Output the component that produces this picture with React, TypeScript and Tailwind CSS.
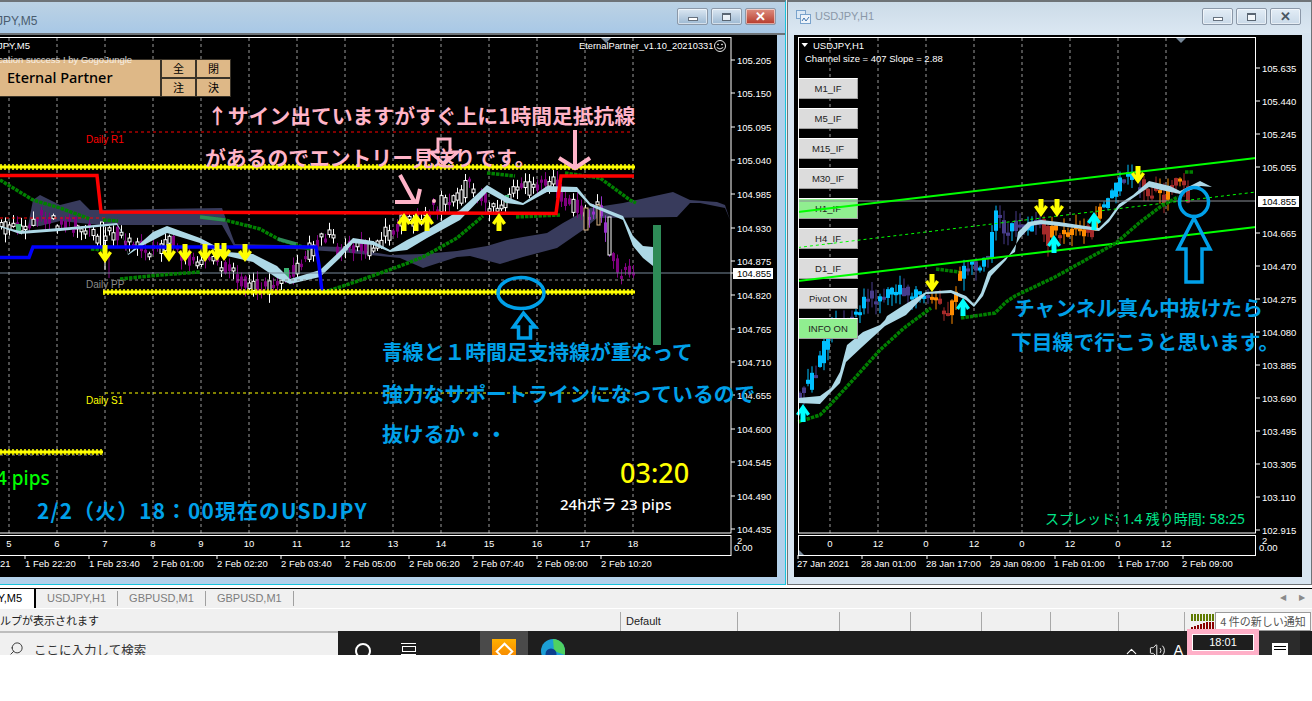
import React from 'react';
import { ChevronUp, Volume2, Search } from 'lucide-react';

type Pt = [number, number];

const at = (path: Pt[], x: number) => {
  for (let i = 1; i < path.length; i++) {
    if (x <= path[i][0]) {
      const [x0, y0] = path[i - 1];
      const [x1, y1] = path[i];
      return y0 + ((y1 - y0) * (x - x0)) / (x1 - x0);
    }
  }
  return path[path.length - 1][1];
};
const rnd = (i: number, s: number) => {
  const v = Math.sin(i * 12.9898 + s * 78.233) * 43758.5453;
  return v - Math.floor(v);
};
const pts = (p: Pt[]) => p.map((q) => q.join(',')).join(' ');

// ---- left chart data
const leftPath: Pt[] = [
  [0, 232], [16, 226], [33, 225], [37, 218], [50, 217], [60, 222], [75, 222], [100, 238], [117, 232], [130, 245],
  [160, 250], [170, 240], [190, 258], [205, 258], [232, 268], [245, 280], [265, 288], [283, 280], [300, 268], [315, 245],
  [325, 238], [333, 235], [340, 248], [360, 245], [372, 250], [400, 225], [425, 213], [440, 205], [460, 197], [470, 185],
  [490, 203], [500, 208], [520, 190], [545, 187], [557, 182], [565, 205], [575, 205], [590, 218], [600, 205], [608, 222],
  [612, 256], [620, 268], [633, 272],
];
const leftBandTop: Pt[] = [
  [0, 226], [20, 231], [60, 228], [117, 223], [122, 232], [128, 254], [153, 232], [167, 226], [200, 238], [227, 252],
  [253, 254], [277, 266], [290, 279], [320, 270], [340, 251], [353, 238], [373, 241], [390, 250], [407, 240], [427, 230],
  [460, 210], [487, 185], [507, 197], [523, 203], [547, 186], [577, 187], [590, 203], [623, 216], [633, 236], [643, 246], [653, 247],
];
const leftBandBot: Pt[] = [
  [0, 227], [20, 234], [60, 231], [117, 225], [122, 233], [128, 255], [140, 247], [167, 233], [200, 243], [227, 256],
  [253, 262], [277, 278], [290, 284], [320, 277], [340, 258], [353, 243], [373, 245], [390, 252], [407, 250], [427, 238],
  [460, 220], [487, 192], [507, 203], [523, 205], [547, 192], [577, 192], [590, 206], [623, 220], [633, 246], [643, 258], [653, 266],
];
const leftCloud: Pt[] = [
  [28, 226], [33, 200], [40, 195], [60, 205], [80, 200], [90, 210], [222, 208], [228, 225], [235, 244], [280, 245], [340, 247], [390, 255],
  [423, 254], [457, 251], [487, 246], [507, 240], [523, 237], [547, 233], [563, 223], [590, 208], [623, 203], [650, 197], [673, 192],
  [690, 200], [717, 202], [725, 205], [730, 220], [725, 208], [700, 203], [690, 203], [677, 217], [597, 218], [583, 230], [557, 248],
  [523, 257], [500, 264], [470, 256], [457, 257], [423, 268], [400, 258], [340, 252], [280, 248], [235, 248], [222, 225], [100, 225], [60, 221], [40, 226],
];
const leftGreen: Pt[][] = [
  [[0, 180], [33, 200], [60, 208], [90, 219]],
  [[103, 220], [118, 221]],
  [[91, 249], [106, 250]],
  [[200, 217], [225, 220], [260, 229], [280, 240], [310, 249]],
  [[120, 279], [160, 275], [200, 272]],
  [[325, 292], [355, 282], [400, 266], [423, 257], [457, 238], [483, 216]],
  [[487, 173], [515, 176]],
  [[516, 217], [560, 215]],
  [[565, 173], [600, 178], [630, 200], [636, 203]],
];
const leftDown = [[105, 254], [169, 253], [185, 253], [205, 253], [217, 252], [224, 252], [245, 253]];
const leftUp = [[404, 222], [416, 222], [427, 222], [499, 222]];
const leftPrices: [string, number][] = [
  ['105.205', 60], ['105.150', 93], ['105.095', 127], ['105.040', 160], ['104.985', 194], ['104.930', 228], ['104.875', 261],
  ['104.820', 295], ['104.765', 329], ['104.710', 362], ['104.655', 395], ['104.600', 429], ['104.545', 462], ['104.490', 496], ['104.435', 529],
];
const leftTimes: [string, number][] = [
  ['1 Feb 22:20', 25], ['1 Feb 23:40', 89], ['2 Feb 01:00', 153], ['2 Feb 02:20', 217], ['2 Feb 03:40', 281],
  ['2 Feb 05:00', 345], ['2 Feb 06:20', 409], ['2 Feb 07:40', 473], ['2 Feb 09:00', 537], ['2 Feb 10:20', 601],
];

// ---- right chart data
const rightPath: Pt[] = [
  [797, 402], [803, 392], [812, 385], [822, 365], [828, 340], [835, 325], [845, 320], [862, 310], [868, 297], [885, 295], [900, 290], [915, 292],
  [933, 295], [943, 307], [953, 310], [957, 300], [960, 280], [965, 270], [975, 265], [985, 263], [992, 258], [997, 205], [1003, 222], [1010, 235],
  [1015, 222], [1020, 226], [1030, 230], [1040, 222], [1045, 224], [1050, 245], [1055, 228], [1062, 232], [1075, 228], [1085, 232], [1095, 232],
  [1100, 215], [1106, 205], [1110, 195], [1118, 188], [1125, 181], [1132, 178], [1140, 182], [1148, 190], [1155, 192], [1163, 195], [1168, 197],
  [1172, 186], [1178, 180], [1185, 181], [1188, 195], [1190, 200],
];
const rightBand: Pt[] = [
  [797, 398], [819, 396], [830, 388], [839, 372], [846, 345], [862, 332], [879, 325], [884, 320], [886, 316], [903, 305], [925, 292], [950, 290], [965, 296], [973, 304],
  [980, 293], [987, 272], [1004, 258], [1014, 252], [1017, 232], [1027, 222], [1040, 220], [1058, 222], [1098, 228], [1108, 218], [1118, 204], [1132, 195],
  [1148, 181], [1169, 186], [1179, 191], [1199, 181], [1211, 187],
  [1200, 186], [1179, 194], [1160, 190], [1148, 187], [1132, 198], [1118, 208], [1108, 222], [1098, 231], [1058, 226], [1040, 224], [1030, 226], [1019, 238],
  [1005, 260], [990, 276], [982, 296], [973, 307], [965, 300], [950, 293], [925, 294], [905, 315], [884, 326], [861, 347], [845, 362], [839, 383], [830, 392], [819, 404], [797, 403],
];
const rightGreen: Pt[][] = [
  [[797, 422], [819, 415], [829, 405], [852, 380], [879, 350], [903, 328], [930, 308]],
  [[960, 318], [994, 313], [1005, 302], [1014, 296], [1054, 277], [1115, 243], [1138, 223], [1159, 207], [1177, 197]],
  [[935, 269], [958, 272]],
  [[1184, 172], [1192, 172]],
];
const rightDown = [[931, 283], [1040, 208], [1056, 208], [1137, 175]];
const rightUp = [[1093, 221], [1053, 244], [962, 307], [802, 413]];
const rightPrices: [string, number][] = [
  ['105.635', 68], ['105.440', 101], ['105.245', 134], ['105.055', 167], ['104.665', 233], ['104.470', 266], ['104.275', 299], ['104.080', 332],
  ['103.885', 365], ['103.690', 398], ['103.495', 431], ['103.305', 464], ['103.110', 497], ['102.915', 530],
];
const rightTimes: [string, number][] = [
  ['27 Jan 2021', 797], ['28 Jan 01:00', 861], ['28 Jan 17:00', 926], ['29 Jan 09:00', 990], ['1 Feb 01:00', 1054], ['1 Feb 17:00', 1118], ['2 Feb 09:00', 1182],
];
const rightBars = ['M1_IF', 'M5_IF', 'M15_IF', 'M30_IF', 'H1_IF', 'H4_IF', 'D1_IF', 'Pivot ON', 'INFO ON'];

const seq = (a: number, b: number, s: number) => {
  const r: number[] = [];
  for (let v = a; v <= b; v += s) r.push(v);
  return r;
};

const LeftCandles = () => (
  <g>
    {seq(1, 633, 4).map((x, i) => {
      const a = at(leftPath, x) + (rnd(i, 1) - 0.5) * 16;
      const b = at(leftPath, x + 4) + (rnd(i, 2) - 0.5) * 16;
      const top = Math.min(a, b);
      const h = Math.max(Math.abs(a - b), 3);
      const up = b < a;
      const wickTop = top - 1 - rnd(i, 3) * 8;
      const wickBot = top + h + 1 + rnd(i, 4) * 9;
      const c = up ? '#ffffff' : x > 585 && x < 610 ? '#9932cc' : '#800080';
      return (
        <g key={x}>
          <line x1={x + 0.5} x2={x + 0.5} y1={wickTop} y2={wickBot} stroke={c} />
          <rect x={x - 1} y={top} width={3} height={h} fill={up ? '#000' : c} stroke={up ? '#fff' : 'none'} strokeWidth={1} />
        </g>
      );
    })}
    <line x1="105" x2="105" y1="240" y2="270" stroke="#fff" />
    <rect x="100.500" y="222" width="3" height="25" fill="#000" stroke="#fff" />
    <line x1="109" x2="109" y1="255" y2="278" stroke="#800080" />
    <rect x="584" y="208" width="4" height="22" fill="#000" stroke="#deb887" />
    <rect x="597" y="205" width="3" height="20" fill="#000" stroke="#deb887" />
    <rect x="608" y="217" width="3" height="38" fill="#000" stroke="#fff" />
    <rect x="74" y="217" width="3" height="13" fill="#800080" />
    <rect x="284" y="268" width="5" height="11" fill="#3cb371" />
    <rect x="16" y="224" width="5" height="8" fill="#3cb371" />
    <rect x="505" y="195" width="4" height="8" fill="#3cb371" />
  </g>
);

const RightCandles = () => (
  <g>
    {seq(799, 1190, 4).map((x, i) => {
      const a = at(rightPath, x) + (rnd(i, 5) - 0.5) * 13;
      const b = at(rightPath, x + 4) + (rnd(i, 6) - 0.5) * 13;
      const top = Math.min(a, b);
      const h = Math.max(Math.abs(a - b), 3);
      const up = b < a;
      const warm = (x > 928 && x < 960) || (x > 1042 && x < 1100) || x > 1140;
      const c = warm ? (up ? '#ff8c00' : '#a52a2a') : up ? '#00bfff' : '#483d8b';
      return (
        <g key={x}>
          <line x1={x} x2={x} y1={top - rnd(i, 7) * 12} y2={top + h + rnd(i, 8) * 12} stroke={c} />
          <rect x={x - 2} y={top} width={4} height={h} fill={c} />
        </g>
      );
    })}
  </g>
);

const Arrow = ({ x, y, c, down }: { x: number; y: number; c: string; down?: boolean }) => (
  <path
    transform={`translate(${x} ${y})${down ? ' scale(1 -1)' : ''}`}
    d="M0 -9 L7 1 L4 3 L2.500 0 L2.500 9 L-2.500 9 L-2.500 0 L-4 3 L-7 1 Z"
    fill={c}
  />
);

const Stars = ({ x1, x2, y }: { x1: number; x2: number; y: number }) => (
  <g>
    <line x1={x1} x2={x2} y1={y} y2={y} stroke="#c8c800" strokeWidth="6" strokeDasharray="2 2" />
    <line x1={x1} x2={x2} y1={y} y2={y} stroke="#ffff00" strokeWidth="3" />
  </g>
);

const Dotted = ({ p }: { p: Pt[] }) => (
  <polyline points={pts(p)} fill="none" stroke="#008000" strokeWidth="3.500" strokeDasharray="3.500 1" />
);

const Smiley = () => (
  <g fill="none" stroke="#fff" strokeWidth="0.900">
    <circle cx="720" cy="46" r="5.500" />
    <circle cx="718" cy="44.500" r="0.500" />
    <circle cx="722" cy="44.500" r="0.500" />
    <path d="M716.800 47.500 Q720 50.500 723.200 47.500" />
  </g>
);

const LeftChart = () => (
  <svg className="block font-['Liberation_Sans']" width="777" height="542" viewBox="0 35 777 542">
    {seq(9, 633, 48).map((x) => (
      <line key={x} x1={x} x2={x} y1="38" y2="533" stroke="#9a9a9a" strokeDasharray="3 3" />
    ))}
    <polygon points={pts(leftCloud)} fill="#383b5c" />
    <LeftCandles />
    <polygon points={pts([...leftBandTop, ...[...leftBandBot].reverse()])} fill="#add8e6" />
    <line x1="105" x2="633" y1="132" y2="132" stroke="#ff0000" strokeDasharray="3 3" />
    <line x1="105" x2="633" y1="280" y2="280" stroke="#8a8a8a" strokeDasharray="3 3" />
    <line x1="105" x2="633" y1="393" y2="393" stroke="#ffff00" strokeDasharray="3 3" />
    <line x1="0" x2="103" y1="455" y2="455" stroke="#8a8a8a" strokeDasharray="3 3" />
    <line x1="0" x2="105" y1="218" y2="218" stroke="#ff0000" strokeDasharray="3 3" />
    <line x1="0" x2="731" y1="273" y2="273" stroke="#778899" />
    {leftGreen.map((p, i) => (
      <Dotted key={i} p={p} />
    ))}
    <polyline points="200,217 225,220" fill="none" stroke="#2e8b57" strokeWidth="3.500" />
    <polyline points="278,239 296,244" fill="none" stroke="#2e8b57" strokeWidth="3.500" />
    <polyline points="0,257.500 29,257.500 33,247 316,247 319,265 322,292" fill="none" stroke="#0000ff" strokeWidth="3.500" />
    <polyline points="0,175.500 97,175.500 101,212 556,213.500 561,176 634,176" fill="none" stroke="#ff0000" strokeWidth="3.500" />
    <Stars x1={0} x2={635} y={167} />
    <Stars x1={103} x2={635} y={292} />
    <Stars x1={0} x2={103} y={452} />
    {leftDown.map(([x, y]) => (
      <Arrow key={x} x={x} y={y} c="#ffff00" down />
    ))}
    {leftUp.map(([x, y]) => (
      <Arrow key={x} x={x} y={y} c="#ffff00" />
    ))}
    <rect x="653" y="225" width="8" height="120" fill="#2e8b57" />

    <circle cx="434" cy="201" r="2" fill="#ffb3c8" />
    <g fill="none" stroke="#ffb3c8" strokeWidth="4">
      <path d="M400 175 L414 201 M395 202 L417 202 L420 189" />
      <path d="M575 130 L575 168 M559 158 L575 168 L590 158" />
      <path d="M438 139 L450 139 L450 152 L458 152 L444 164 L430 152 L438 152 Z" strokeWidth="3" />
    </g>
    <g fill="none" stroke="#00a0e9" strokeWidth="3.500">
      <ellipse cx="521" cy="293" rx="23" ry="15.500" />
      <path d="M523.500 313 L513.500 327 L518.500 327 L518.500 338 L530.500 338 L530.500 327 L535.500 327 Z" />
    </g>

    <rect x="-2" y="37.500" width="733" height="495.500" fill="none" stroke="#fff" />
    <rect x="-2" y="535.500" width="733" height="20" fill="none" stroke="#fff" />
    <path d="M601 38 L611 38 L606 43 Z" fill="#778899" />
    <Smiley />
    <g fill="#fff" fontSize="9.500">
      {leftPrices.map(([t, y]) => (
        <g key={t}>
          <line x1="731" x2="735" y1={y} y2={y} stroke="#fff" />
          <text x="737" y={y + 3.500}>{t}</text>
        </g>
      ))}
      <rect x="733" y="268" width="40" height="11" fill="#fff" />
      <line x1="731" x2="735" y1="273" y2="273" stroke="#fff" />
      <text x="737" y="276.500" fill="#000">104.855</text>
      <text x="737" y="544">2</text>
      <text x="734" y="551">0.00</text>
      {seq(5, 18, 1).map((n, i) => (
        <text key={n} x={9 + i * 48} y="546.500" textAnchor="middle">{n}</text>
      ))}
      <text x="0" y="567">21</text>
      {leftTimes.map(([t, x]) => (
        <g key={t}>
          <line x1={x} x2={x} y1="555" y2="559" stroke="#fff" />
          <text x={x} y="567">{t}</text>
        </g>
      ))}
      <text x="-2" y="49">JPY,M5</text>
      <text x="579" y="49" fontSize="9.300">EternalPartner_v1.10_20210331</text>
    </g>
    <g fontSize="10">
      <text x="86" y="143" fill="#ff0000">Daily R1</text>
      <text x="86" y="288" fill="#8a8a8a">Daily PP</text>
      <text x="86" y="404" fill="#ffff00">Daily S1</text>
    </g>
  </svg>
);

const RightChart = () => (
  <svg className="block font-['Liberation_Sans']" width="508" height="542" viewBox="793 35 508 542">
    {seq(829, 1166, 48).map((x) => (
      <line key={x} x1={x} x2={x} y1="38" y2="533" stroke="#9a9a9a" strokeDasharray="3 3" />
    ))}
    <RightCandles />
    <polygon points={pts(rightBand)} fill="#add8e6" />
  </svg>
);

const RightOverlay = () => (
  <svg className="absolute inset-0 font-['Liberation_Sans']" width="508" height="542" viewBox="793 35 508 542">
    <line x1="797" x2="1255" y1="201" y2="201" stroke="#8a8f96" />
    <line x1="797" x2="1255" y1="247.500" y2="192" stroke="#00ff00" strokeDasharray="3 3" />
    <line x1="797" x2="1255" y1="212" y2="158" stroke="#00ff00" strokeWidth="2" />
    <line x1="797" x2="1255" y1="281" y2="227" stroke="#00ff00" strokeWidth="2" />
    {rightGreen.map((p, i) => (
      <Dotted key={i} p={p} />
    ))}
    {rightDown.map(([x, y]) => (
      <Arrow key={x} x={x} y={y} c="#ffff00" down />
    ))}
    {rightUp.map(([x, y]) => (
      <Arrow key={x} x={x} y={y} c="#00ffff" />
    ))}
    <g fill="none" stroke="#00a0e9" strokeWidth="3.500">
      <circle cx="1193" cy="202" r="14.500" />
      <path d="M1193 218 L1177 249 L1185 249 L1185 282 L1201 282 L1201 249 L1209 249 Z" />
    </g>
    <rect x="797.500" y="37.500" width="457" height="495.500" fill="none" stroke="#fff" />
    <rect x="797.500" y="535.500" width="457" height="20" fill="none" stroke="#fff" />
    <path d="M1175 38 L1185 38 L1180 43 Z" fill="#778899" />
    <path d="M798 555 L798 550 L803 555 Z" fill="#778899" />
    <path d="M800.500 43 L807 43 L803.750 47 Z" fill="#fff" />
    <g fill="#fff" fontSize="9.500">
      {rightPrices.map(([t, y]) => (
        <g key={t}>
          <line x1="1255" x2="1259" y1={y} y2={y} stroke="#fff" />
          <text x="1261" y={y + 3.500}>{t}</text>
        </g>
      ))}
      <rect x="1257" y="196" width="41" height="11" fill="#fff" />
      <text x="1261" y="204.500" fill="#000">104.855</text>
      <text x="1261" y="544">2</text>
      <text x="1258" y="551">0.00</text>
      {['0', '12', '0', '12', '0', '12', '0', '12'].map((t, i) => (
        <text key={i} x={829 + i * 48} y="546.500" textAnchor="middle">{t}</text>
      ))}
      {rightTimes.map(([t, x]) => (
        <g key={t}>
          <line x1={x} x2={x} y1="555" y2="559" stroke="#fff" />
          <text x={x - 1} y="567">{t}</text>
        </g>
      ))}
      <text x="812" y="49">USDJPY,H1</text>
      <text x="804" y="62">Channel size = 407 Slope = 2.88</text>
    </g>
  </svg>
);

const WinButtons = ({ active }: { active?: boolean }) => {
  const base = 'w-[31px] h-[17px] rounded-[2px] border border-[#8b98a8] flex items-center justify-center shadow-[inset_0_0_0_1px_rgba(255,255,255,0.55)]';
  const plain = active ? 'bg-gradient-to-b from-[#dbe7f2] to-[#9db9d3]' : 'bg-gradient-to-b from-[#e3edf6] to-[#c9d9e8]';
  return (
    <div className="flex gap-[3px]">
      <div className={`${base} ${plain}`}>
        <div className="w-[10px] h-[4px] mt-[5px] bg-white border border-[#66717e]" />
      </div>
      <div className={`${base} ${plain}`}>
        <div className="w-[9px] h-[8px] bg-white/70 border border-t-2 border-[#5a6673]" />
      </div>
      <div className={`${base} ${active ? 'bg-gradient-to-b from-[#dd8d7f] to-[#b5392b]' : plain}`}>
        <span className={`text-[13px] leading-none font-bold font-['Liberation_Sans'] ${active ? 'text-white' : 'text-[#4a5663]'}`}>✕</span>
      </div>
    </div>
  );
};

const pink = "absolute font-['Noto_Sans_CJK_JP',sans-serif] font-bold text-[20.800px] leading-none whitespace-nowrap text-[#ffb4c8]";
const blue = "absolute font-['Noto_Sans_CJK_JP',sans-serif] font-bold text-[20.800px] leading-none whitespace-nowrap text-[#00a0e9]";

const Tan = ({ t }: { t: string }) => (
  <div className="flex items-center justify-center border border-[#3a3328] text-[11px] text-black font-['Noto_Sans_CJK_JP',sans-serif]">{t}</div>
);

const LeftWindow = () => (
  <div className="w-[786px] h-[585px] flex flex-col bg-[#b3d0ea] border-t-2 border-t-[#6e7377] border-r border-b border-r-[#19c2dc] border-b-[#19c2dc]">
    <div className="h-[31px] flex items-center justify-end pr-[9px] pb-[2px] bg-gradient-to-b from-[#bcd2e4] to-[#a8c8e6] relative">
      <span className="absolute left-[-3px] top-[13px] text-[12px] leading-none text-[#4a5c6e] font-['Liberation_Sans']">JPY,M5</span>
      <WinButtons active />
    </div>
    <div className="h-[2px] bg-[#6e7377]" />
    <div className="relative w-[777px] h-[542px] bg-black overflow-hidden">
      <LeftChart />
      <div className="absolute left-[-2px] top-[24px] w-[233px] h-[38px] grid grid-cols-[163px_35px_35px] grid-rows-2 bg-[#deb887]">
        <div className="row-span-2 flex items-center pl-[8px] border border-[#3a3328] text-[14.500px] font-medium text-black font-['Noto_Sans',sans-serif]">Eternal Partner</div>
        <Tan t="全" />
        <Tan t="閉" />
        <Tan t="注" />
        <Tan t="決" />
      </div>
      <span className="absolute left-[-2px] top-[19px] text-[9.500px] leading-[11px] whitespace-nowrap text-white/80 font-['Liberation_Sans']">cation success ! by GogoJungle</span>
      <span className={`${pink} left-[207px] top-[70px]`}>↑サイン出ていますがすぐ上に1時間足抵抗線</span>
      <span className={`${pink} left-[205px] top-[112px]`}>があるのでエントリー見送りです。</span>
      <span className={`${blue} left-[382px] top-[306px]`}>青線と１時間足支持線が重なって</span>
      <span className={`${blue} left-[382px] top-[348px]`}>強力なサポートラインになっているので</span>
      <span className={`${blue} left-[382px] top-[388px]`}>抜けるか・・</span>
      <span className={`${blue} left-[37px] top-[465px] tracking-[1.200px]`}>2/2（火）18：00現在のUSDJPY</span>
      <span className="absolute left-[-4px] top-[434px] text-[19px] leading-none font-medium text-[#00ff00] font-['Noto_Sans',sans-serif]">4 pips</span>
      <span className="absolute left-[620px] top-[424px] text-[27px] leading-none font-medium text-[#ffff00] font-['Noto_Sans',sans-serif]">03:20</span>
      <span className="absolute left-[560px] top-[462px] text-[15px] leading-none font-medium whitespace-nowrap text-white font-['Noto_Sans','Noto_Sans_CJK_JP',sans-serif]">24hボラ 23 pips</span>
    </div>
  </div>
);

const ChartIcon = () => (
  <svg width="15" height="14" viewBox="0 0 15 14" fill="none" stroke="#7aa3cc">
    <rect x="0.500" y="0.500" width="9" height="8" fill="#dbe8f4" />
    <rect x="4.500" y="4.500" width="10" height="9" fill="#eef4fa" />
    <path d="M6 11 L8 8 L10 11 L13 7" stroke="#3f74ad" />
  </svg>
);

const RightWindow = () => (
  <div className="w-[525px] h-[585px] ml-[1px] flex flex-col bg-[#d8e5f1] border border-[#6e7377] border-t-2">
    <div className="h-[31px] flex items-center justify-between pl-[8px] pr-[9px] pb-[2px] bg-gradient-to-b from-[#cbdbe8] to-[#dbe7f2]">
      <div className="flex items-center gap-[4px]">
        <ChartIcon />
        <span className="text-[11px] leading-none text-[#8a98a8] font-['Liberation_Sans']">USDJPY,H1</span>
      </div>
      <div className="mr-[1px]">
        <WinButtons />
      </div>
    </div>
    <div className="ml-[6px] w-[508px] h-[542px] bg-black relative overflow-hidden mt-[2px]">
      <RightChart />
      <div className="absolute left-[4px] top-[43px] w-[60px] flex flex-col gap-[9px] font-['Liberation_Sans']">
        {rightBars.map((b) => (
          <div
            key={b}
            className={`h-[21px] flex items-center justify-center text-[9.500px] leading-none text-[#222] border border-t-white border-l-white border-r-[#a0a0a0] border-b-[#a0a0a0] ${
              b === 'H1_IF' || b === 'INFO ON' ? 'bg-[#90ee90]' : 'bg-[#dcdcdc]'
            }`}
          >
            {b}
          </div>
        ))}
      </div>
      <RightOverlay />
      <span className={`${blue} left-[220px] top-[262px]`}>チャンネル真ん中抜けたら</span>
      <span className={`${blue} left-[217px] top-[296px]`}>下目線で行こうと思います。</span>
      <span className="absolute left-[251px] top-[477px] text-[14px] leading-none whitespace-nowrap text-[#00e58a] font-['Noto_Sans','Noto_Sans_CJK_JP',sans-serif]">スプレッド: 1.4 残り時間: 58:25</span>
    </div>
  </div>
);

const TabBar = () => (
  <div className="h-[20px] mt-[3px] bg-[#f0f0f0] border-t border-black flex items-stretch text-[11px] text-[#7d7d7d] font-['Liberation_Sans'] relative">
    <div className="w-[36px] bg-white border-r-2 border-r-black text-black flex items-center justify-end pr-[12px]">JPY,M5</div>
    {['USDJPY,H1', 'GBPUSD,M1', 'GBPUSD,M1'].map((t, i) => (
      <div key={i} className="px-[11px] flex items-center border-r border-r-[#a0a0a0] my-[2px]">{t}</div>
    ))}
    <div className="absolute left-[1280px] top-[5px] text-[8px] leading-none text-[#8a8a8a]">◀</div>
    <div className="absolute left-[1299px] top-[5px] text-[8px] leading-none text-[#8a8a8a]">▶</div>
  </div>
);

const statusCells = [117, 102, 71, 71, 69, 68, 66];

const StatusBar = () => (
  <div className="h-[22px] mt-[1px] bg-[#f0f0f0] flex items-center relative text-[11px] text-[#222] font-['Noto_Sans_CJK_JP','Liberation_Sans',sans-serif]">
    <div className="w-[620px] overflow-hidden whitespace-nowrap">
      <span>ルプが表示されます</span>
    </div>
    {statusCells.map((w, i) => (
      <div key={i} className="h-[19px] mt-[2px] border-l border-l-[#a8a8a8] pl-[5px] font-['Liberation_Sans'] leading-[19px]" style={{ width: w }}>
        {i === 0 ? 'Default' : ''}
      </div>
    ))}
    <div className="h-[19px] mt-[2px] border-l border-l-[#a8a8a8]" />
    <svg className="ml-[6px] mt-[2px]" width="24" height="17" viewBox="0 0 24 17">
      {seq(0, 22, 3).map((x, i) => (
        <g key={x}>
          <rect x={x} y="1" width="2" height="7" fill="#5f7a00" />
          <rect x={x} y={Math.max(9, 14 - i)} width="2" height={16 - Math.max(9, 14 - i)} fill="#8b0000" />
        </g>
      ))}
    </svg>
    <div className="absolute left-[1215px] top-[3px] w-[96px] h-[19px] bg-white border border-[#9a9a9a] flex items-center justify-center text-[11px] text-[#555]">4 件の新しい通知</div>
  </div>
);

const Taskbar = () => (
  <div className="h-[24px] flex relative">
    <div className="w-[338px] h-full bg-[#f0f0f0] border-t-2 border-t-[#bdbdbd] overflow-hidden flex items-start pl-[9px] pt-[8px] gap-[10px] text-[#333]">
      <Search size={15} strokeWidth={1.5} className="-scale-x-100 shrink-0" />
      <span className="text-[12.500px] leading-[18px] whitespace-nowrap font-['Noto_Sans_CJK_JP',sans-serif]">ここに入力して検索</span>
    </div>
    <div className="flex-1 bg-[#1e1e1e] overflow-hidden flex items-start">
      <div className="w-[16px]" />
      <div className="w-[16px] h-[16px] mt-[12px] ml-[1px] rounded-full border-2 border-white" />
      <div className="ml-[30px] mt-[12px] w-[15px] h-[12px] border border-white border-x-0 flex items-center justify-center">
        <div className="w-[14px] h-[6px] border border-white" />
      </div>
      <div className="ml-[64px] w-[48px] h-full bg-[#4a4a4a] flex justify-center pt-[8px]">
        <div className="w-[24px] h-[24px] bg-gradient-to-b from-[#ffb000] to-[#f27a00] flex items-center justify-center">
          <div className="w-[13px] h-[13px] rotate-45 border-2 border-white" />
        </div>
      </div>
      <svg className="ml-[13px] mt-[8px]" width="24" height="24" viewBox="0 0 24 24">
        <circle cx="12" cy="12" r="12" fill="#1c9fd6" />
        <path d="M12 0 A12 12 0 0 1 24 12 L24 16 L13 12 Z" fill="#4fd162" />
        <circle cx="10" cy="15" r="5.500" fill="#0d3f8f" />
      </svg>
      <div className="flex-1" />
      <ChevronUp size={17} strokeWidth={1.5} className="text-white mt-[12px] mr-[9px]" />
      <Volume2 size={17} strokeWidth={1.3} className="text-white mt-[11px] mr-[8px]" />
      <span className="text-white text-[14px] leading-none mt-[12px] mr-[76px] font-['Liberation_Sans']">A</span>
      <div className="w-[41px] h-full bg-[#2b2b2b] relative shrink-0 mr-[12px]">
        <div className="absolute left-[13px] top-[12px] w-[16px] h-[16px] bg-white">
          <div className="mx-[2px] mt-[3px] h-[1px] bg-black" />
          <div className="mx-[2px] mt-[2px] h-[1px] bg-black" />
        </div>
      </div>
    </div>
    <div className="absolute left-[1187px] top-[-2px] w-[72px] h-[26px] bg-[#ffb0c8] px-[5px] pt-[5px] pb-[4px]">
      <div className="h-full border border-white bg-[#1e1e1e] flex items-center justify-center text-[11px] text-white leading-none font-['Liberation_Sans']">18:01</div>
    </div>
  </div>
);

export default function App() {
  return (
    <div className="w-[1312px] h-[701px] bg-white overflow-hidden flex flex-col">
      <div className="flex h-[585px] bg-[#f0f0f0]">
        <LeftWindow />
        <RightWindow />
      </div>
      <TabBar />
      <StatusBar />
      <Taskbar />
    </div>
  );
}
